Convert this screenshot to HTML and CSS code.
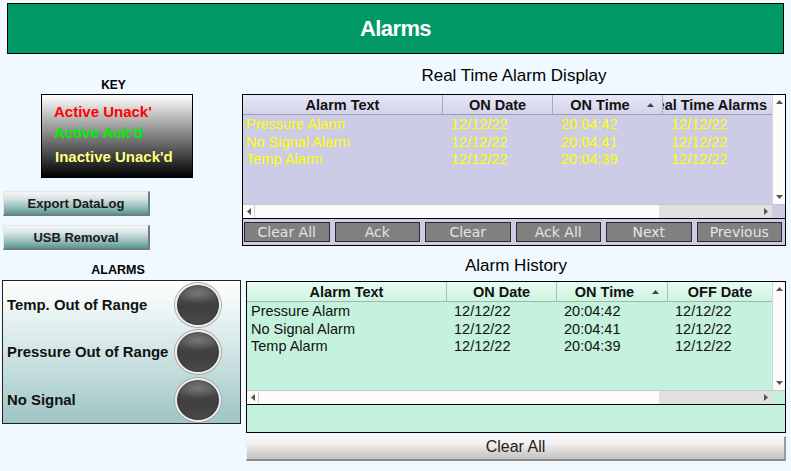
FILE: index.html
```html
<!DOCTYPE html>
<html>
<head>
<meta charset="utf-8">
<title>Alarms</title>
<link rel="stylesheet" href="styles.css">
</head>
<body>
<div class="title-bar">Alarms</div>
<div class="main">
  <div class="left">
    <div class="key-title">KEY</div>
    <div class="key-box">
      <div class="key-item red">Active Unack'</div>
      <div class="key-item green">Active Ack'd</div>
      <div class="key-item yellow">Inactive Unack'd</div>
    </div>
    <button class="side-btn export">Export DataLog</button>
    <button class="side-btn usb">USB Removal</button>
    <div class="alarms-title">ALARMS</div>
    <div class="alarms-box">
      <div class="alarm-row"><span>Temp. Out of Range</span><span class="lamp"></span></div>
      <div class="alarm-row"><span>Pressure Out of Range</span><span class="lamp"></span></div>
      <div class="alarm-row"><span>No Signal</span><span class="lamp"></span></div>
    </div>
  </div>
  <div class="right">
    <div class="section-title">Real Time Alarm Display</div>
    <div class="frame rt">
      <div class="grid-main">
        <div class="cols">
          <div class="hdr-row">
            <div class="hcell">Alarm Text</div>
            <div class="hcell">ON Date</div>
            <div class="hcell sorted"><span class="htext">ON Time</span><svg class="sort" width="7" height="4" viewBox="0 0 7 4"><polygon points="0,4 3.5,0 7,4"/></svg></div>
            <div class="hcell clipped"><span>Real Time Alarms</span></div>
          </div>
          <div class="row"><span>Pressure Alarm</span><span>12/12/22</span><span>20:04:42</span><span>12/12/22</span></div>
          <div class="row"><span>No Signal Alarm</span><span>12/12/22</span><span>20:04:41</span><span>12/12/22</span></div>
          <div class="row"><span>Temp Alarm</span><span>12/12/22</span><span>20:04:39</span><span>12/12/22</span></div>
        </div>
        <div class="vscroll">
          <svg width="7" height="4" viewBox="0 0 7 4"><polygon points="0,4 3.5,0 7,4"/></svg>
          <svg width="7" height="4" viewBox="0 0 7 4"><polygon points="0,0 7,0 3.5,4"/></svg>
        </div>
      </div>
      <div class="hscroll-row">
        <div class="hs-left"><svg width="4" height="7" viewBox="0 0 4 7"><polygon points="4,0 4,7 0,3.5"/></svg></div>
        <div class="hs-thumb"></div>
        <div class="hs-track"><svg width="4" height="7" viewBox="0 0 4 7"><polygon points="0,0 0,7 4,3.5"/></svg></div>
        <div class="corner"></div>
      </div>
      <div class="rt-buttons">
        <button class="rt-btn">Clear All</button>
        <button class="rt-btn">Ack</button>
        <button class="rt-btn">Clear</button>
        <button class="rt-btn">Ack All</button>
        <button class="rt-btn">Next</button>
        <button class="rt-btn">Previous</button>
      </div>
    </div>
    <div class="section-title hist-title">Alarm History</div>
    <div class="frame hist">
      <div class="grid-main">
        <div class="cols">
          <div class="hdr-row">
            <div class="hcell">Alarm Text</div>
            <div class="hcell">ON Date</div>
            <div class="hcell sorted"><span class="htext">ON Time</span><svg class="sort" width="7" height="4" viewBox="0 0 7 4"><polygon points="0,4 3.5,0 7,4"/></svg></div>
            <div class="hcell">OFF Date</div>
          </div>
          <div class="row"><span>Pressure Alarm</span><span>12/12/22</span><span>20:04:42</span><span>12/12/22</span></div>
          <div class="row"><span>No Signal Alarm</span><span>12/12/22</span><span>20:04:41</span><span>12/12/22</span></div>
          <div class="row"><span>Temp Alarm</span><span>12/12/22</span><span>20:04:39</span><span>12/12/22</span></div>
        </div>
        <div class="vscroll">
          <svg width="7" height="4" viewBox="0 0 7 4"><polygon points="0,4 3.5,0 7,4"/></svg>
          <svg width="7" height="4" viewBox="0 0 7 4"><polygon points="0,0 7,0 3.5,4"/></svg>
        </div>
      </div>
      <div class="hscroll-row">
        <div class="hs-left"><svg width="4" height="7" viewBox="0 0 4 7"><polygon points="4,0 4,7 0,3.5"/></svg></div>
        <div class="hs-thumb"></div>
        <div class="hs-track"><svg width="4" height="7" viewBox="0 0 4 7"><polygon points="0,0 0,7 4,3.5"/></svg></div>
        <div class="corner"></div>
      </div>
      <div class="hist-foot"></div>
    </div>
    <button class="clear-all">Clear All</button>
  </div>
</div>
</body>
</html>
```
FILE: styles.css
```css
* { box-sizing: border-box; }
html, body { margin: 0; padding: 0; }
body {
  width: 791px;
  height: 471px;
  overflow: hidden;
  background: #f0f9ff;
  font-family: "Liberation Sans", Arial, sans-serif;
  color: #000;
}
button { font: inherit; margin: 0; padding: 0; cursor: default; }

.title-bar {
  margin: 3px 7px 0 7px;
  height: 51px;
  border: 1px solid #000;
  background: #009966;
  color: #fff;
  font-weight: bold;
  font-size: 22px;
  letter-spacing: -0.6px;
  line-height: 49px;
  text-align: center;
}

.main { display: flex; }
.left { width: 242px; display: flex; flex-direction: column; }
.right { width: 544px; display: flex; flex-direction: column; }

.key-title {
  margin: 24px 0 2px 41px;
  width: 145px;
  font-size: 12px;
  font-weight: bold;
  line-height: 14px;
  text-align: center;
}
.key-box {
  margin-left: 41px;
  width: 152px;
  height: 84px;
  border: 1px solid #000;
  background: linear-gradient(to bottom, #ffffff 0%, #9a9a9a 40%, #000 100%);
  padding: 8px 0 0 12px;
  font-size: 15px;
  font-weight: bold;
}
.key-item { line-height: 18px; }
.key-item.red { color: #ff0000; }
.key-item.green { color: #00ee00; margin-top: 3px; }
.key-item.yellow { color: #ffff80; margin-top: 6px; padding-left: 1px; }

.side-btn {
  margin-left: 3px;
  width: 147px;
  height: 25px;
  border: 1px solid #e4e8e8;
  border-right: 2px solid #6f7f7f;
  border-bottom: 2px solid #6f7f7f;
  background: linear-gradient(to bottom, #f6f6f6 0%, #d8e4e4 30%, #8cb6b6 75%, #5e9494 100%);
  font-weight: bold;
  font-size: 13px;
  color: #1a1a1a;
  line-height: 21px;
}
.side-btn.export { margin-top: 13px; }
.side-btn.usb { margin-top: 9px; }

.alarms-title {
  margin-top: 13px;
  width: 236px;
  font-size: 12.5px;
  font-weight: bold;
  line-height: 14px;
  text-align: center;
}
.alarms-box {
  margin: 3px 0 0 2px;
  width: 239px;
  height: 144px;
  border: 1px solid #222;
  background: linear-gradient(to bottom, #ffffff 0%, #d6e8e8 45%, #9ec4c4 100%);
  display: grid;
  grid-template-rows: 1fr 1fr 1fr;
}
.alarm-row {
  display: flex;
  align-items: center;
  justify-content: space-between;
  padding: 0 19px 0 4px;
  font-size: 14.9px;
  font-weight: bold;
  color: #111;
}
.alarm-row:first-child { padding-top: 1px; }
.alarm-row:last-child { padding-bottom: 0; padding-top: 2px; }
.lamp {
  flex: none;
  width: 46px;
  height: 44px;
  border-radius: 50%;
  border: 2px solid #ececec;
  box-shadow: 0 0 0 1px #a8a8a8, inset 0 0 2px #222;
  background:
    radial-gradient(ellipse 70% 30% at 50% 22%, rgba(255,255,255,0.22), rgba(255,255,255,0) 80%),
    linear-gradient(to bottom, #5a5a5a 0%, #3e3e3e 55%, #4a4a4a 100%);
}

.section-title {
  padding-top: 12px;
  margin-bottom: 9px;
  font-size: 17px;
  line-height: 19px;
  height: 31px;
  text-align: center;
}
.hist-title { padding-top: 0; height: 19px; margin-top: 10px; margin-bottom: 6px; margin-left: 4px; }

.frame { border: 1px solid #000; display: flex; flex-direction: column; }
.frame.rt { background: #ccccE6; }
.frame.hist { background: #c5f2dc; margin-left: 4px; }

.grid-main { display: flex; height: 109px; }
.hist .grid-main { height: 108px; }
.cols { flex: 1; overflow: hidden; }
.hdr-row, .row { display: grid; }
.rt .hdr-row, .rt .row { grid-template-columns: 200px 110px 110px 1fr; }
.hist .hdr-row, .hist .row { grid-template-columns: 200px 110px 111px 1fr; }

.hdr-row {
  height: 20px;
  border-bottom: 1px solid #9c9cb4;
  font-weight: bold;
  font-size: 14.5px;
  line-height: 19px;
  padding-top: 1px;
}
.rt .hdr-row { background: linear-gradient(to bottom, #e8e8f8, #d2d2ea); }
.hist .hdr-row { background: linear-gradient(to bottom, #e6fcf1, #cff4e1); border-bottom-color: #9cb8aa; }
.hist .hdr-row { height: 20px; line-height: 18px; }

.hcell {
  text-align: center;
  border-right: 1px solid #a8a8c0;
  white-space: nowrap;
  overflow: hidden;
  color: #111;
  margin-top: -1px;
}
.hist .hcell { border-right-color: #a8c4b6; }
.hcell:last-child { border-right: none; }
.hcell.sorted { display: flex; align-items: center; padding-right: 8px; }
.hcell.sorted .htext { flex: 1; text-align: center; padding-top: 1px; }
.sort { fill: #444; margin-top: 1px; }
.hcell.clipped { display: flex; justify-content: flex-end; padding-right: 5px; }
.hcell.clipped span { flex: none; padding-top: 1px; }
.hcell { padding-top: 1px; }
.hcell.sorted, .hcell.clipped { padding-top: 0; }

.row {
  font-size: 14.5px;
  line-height: 17.5px;
  white-space: nowrap;
}
.rt .row { color: #ffff00; }
.hist .row { color: #111; }
.rt .row span:first-child { padding-left: 3px; }
.hist .row span:first-child { padding-left: 4px; }
.row span { padding-left: 8px; overflow: hidden; }
.hist .row span { padding-left: 7px; }
.rt .hdr-row + .row { margin-top: 1px; }
.hist .hdr-row + .row { margin-top: 1px; }

.vscroll {
  width: 13px;
  background: #fdfbfb;
  border-left: 1px solid #d4d4d4;
  display: flex;
  flex-direction: column;
  align-items: center;
  justify-content: space-between;
  padding: 5px 0 5px;
}
.vscroll svg, .hscroll-row svg { fill: #555; display: block; }

.hscroll-row {
  display: flex;
  height: 15px;
  border-bottom: 1px solid #000;
  border-top: 1px solid #c8c8c8;
}
.hs-left {
  width: 12px;
  background: #fdfbfb;
  border-right: 1px solid #cfcfcf;
  display: flex;
  align-items: center;
  justify-content: center;
}
.hs-thumb { flex: 1; background: #fdfbfb; }
.hs-track {
  width: 113px;
  background: #e2e0e0;
  display: flex;
  align-items: center;
  justify-content: flex-end;
  padding-right: 4px;
}
.corner { width: 13px; }
.rt .corner { background: #ccccE6; }
.hist .corner { background: #c5f2dc; }

.rt-buttons {
  display: flex;
  gap: 5px;
  height: 26px;
  padding: 3px 3px 3px 1px;
}
.rt-btn {
  flex: 1;
  height: 20px;
  background: #808080;
  border: 1px solid #2a2a2a;
  color: #e4e4e4;
  font-family: "DejaVu Sans", sans-serif;
  font-size: 14px;
  line-height: 18px;
}

.hist-foot { height: 27px; }

.clear-all {
  margin: 3px 0 0 4px;
  height: 25px;
  width: 540px;
  border: 1px solid #f0f0f0;
  border-bottom: 2px solid #8a8a8a;
  border-right: 2px solid #9a9a9a;
  background: linear-gradient(to bottom, #fbf7f7 0%, #f4f0f0 30%, #d2d0d0 75%, #c4c4c4 100%);
  color: #222;
  font-size: 16px;
  line-height: 19px;
  padding-bottom: 3px;
}
```
